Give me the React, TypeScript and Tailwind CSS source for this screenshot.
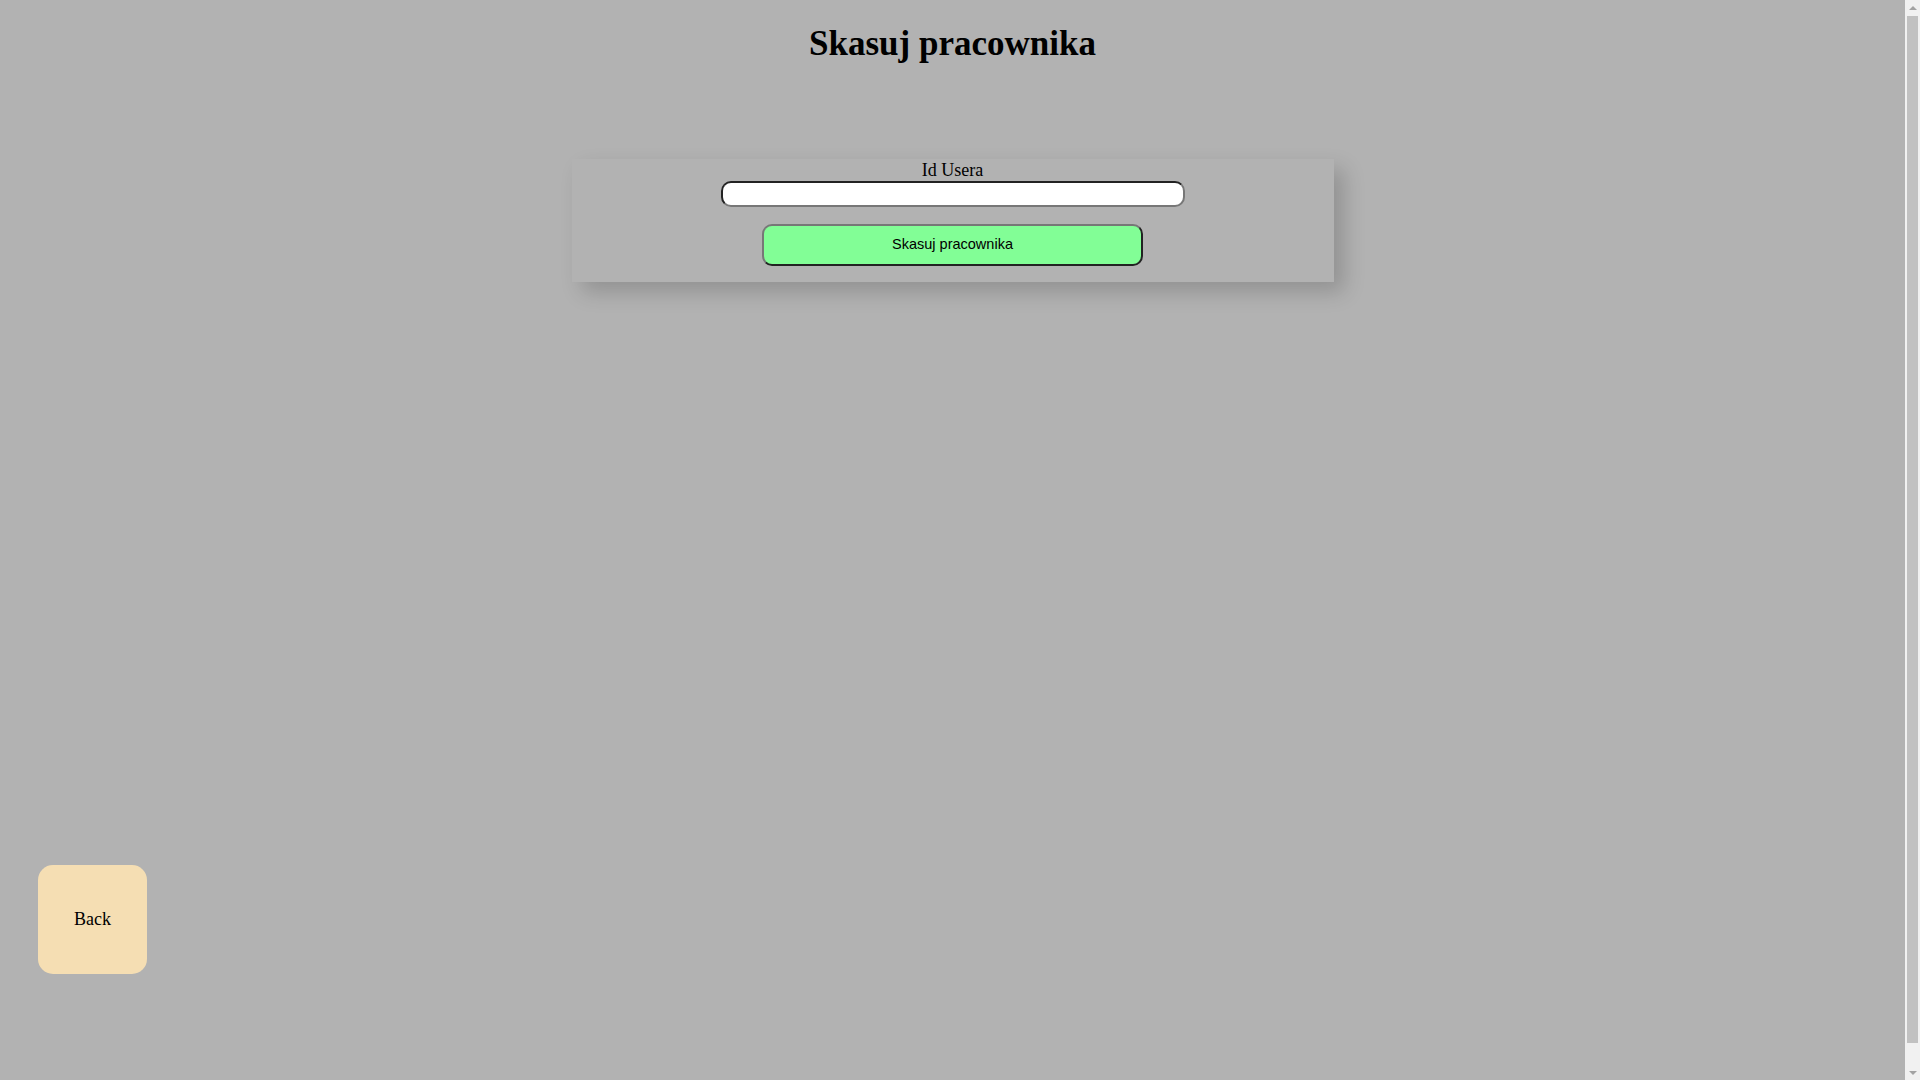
export default function App() {
  return (
    <div className="min-h-[1104px] w-full bg-[#b2b2b2] font-['Liberation_Serif',serif] text-black">
      <div className="mr-[15px] flex flex-col">
        {/* Title */}
        <h1 className="mt-[24px] text-center text-[35px] font-bold leading-[40px]">Skasuj pracownika</h1>

        {/* Delete form card */}
        <div className="mt-[95px] mx-auto w-[762px] bg-[#b2b2b2] shadow-[10px_10px_20px_rgba(0,0,0,0.18)] flex flex-col items-center pb-[16px]">
          <label htmlFor="userId" className="text-[18px] leading-[22px]">
            Id Usera
          </label>
          <input
            id="userId"
            type="text"
            className="w-[464px] h-[26px] bg-white rounded-[10px] border-2 border-t-[#222] border-l-[#222] border-b-[#777] border-r-[#777] outline-none px-2"
          />
          <button
            type="button"
            className="mt-[17px] w-[381px] h-[42px] bg-[#82fe96] rounded-[10px] border-2 border-t-[#777] border-l-[#777] border-b-[#222] border-r-[#222] font-['Liberation_Sans',Arial,sans-serif] text-[14.5px]"
          >
            Skasuj pracownika
          </button>
        </div>

        {/* Back button */}
        <div className="mt-[583px] pl-[38px] pb-[130px]">
          <button
            type="button"
            className="w-[109px] h-[109px] rounded-[15px] bg-[#f5deb3] text-[18px] flex items-center justify-center"
          >
            Back
          </button>
        </div>
      </div>

      {/* Page scrollbar */}
      <div className="fixed top-0 right-0 h-screen w-[15px] bg-[#f1f1f1] flex flex-col items-center">
        <div className="h-[15px] flex items-center justify-center">
          <div className="w-0 h-0 border-l-[4px] border-r-[4px] border-b-[4px] border-l-transparent border-r-transparent border-b-[#a3a3a3]" />
        </div>
        <div className="mt-[1px] w-[11px] h-[1027px] bg-[#c1c1c1]" />
        <div className="mt-auto h-[15px] flex items-center justify-center">
          <div className="w-0 h-0 border-l-[4px] border-r-[4px] border-t-[4px] border-l-transparent border-r-transparent border-t-[#a3a3a3]" />
        </div>
      </div>
    </div>
  )
}
